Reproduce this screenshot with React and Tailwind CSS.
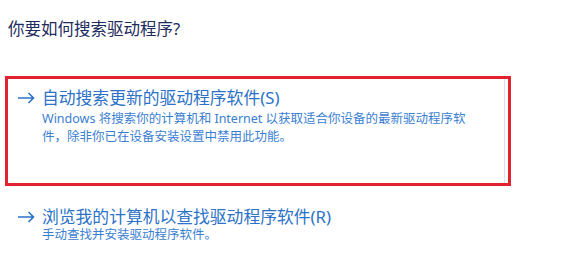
import React from 'react';

function Arrow() {
  return (
    <svg width="18" height="12" viewBox="0 0 18 12" fill="none" className="shrink-0">
      <path d="M1 6H16.5M11.5 1L16.5 6L11.5 11" stroke="#2b72c8" strokeWidth="1.6" />
    </svg>
  );
}

function Option({ title, children }) {
  return (
    <div>
      <div className="flex items-center gap-[7px] text-[16.8px] leading-[18px] text-[#2b72c8]">
        <Arrow />
        <span>{title}</span>
      </div>
      <div className="pl-[25px] text-[12.5px] text-[#3a80d2]">{children}</div>
    </div>
  );
}

export default function App() {
  return (
    <div
      className="w-[567px] h-[268px] bg-white overflow-hidden"
      style={{ fontFamily: '"Noto Sans", "Noto Sans CJK SC", sans-serif' }}
    >
      {/* Heading */}
      <h1 className="pt-[18px] pl-[8px] text-[16.5px] leading-[22px] text-[#1d2c5c] font-normal">
        你要如何搜索驱动程序?
      </h1>

      {/* Selected option, outlined in red */}
      <div className="mt-[36px] ml-[5px] w-[506px] h-[110px] border-[3px] border-[#e3222f]">
        <div className="h-full mr-[3px] border-r border-[#d4e6f6] pt-[10px] pl-[9px]">
          <Option title="自动搜索更新的驱动程序软件(S)">
            <p className="mt-[3px] leading-[18px]">
              Windows 将搜索你的计算机和 Internet 以获取适合你设备的最新驱动程序软
              <br />
              件，除非你已在设备安装设置中禁用此功能。
            </p>
          </Option>
        </div>
      </div>

      {/* Second option */}
      <div className="mt-[22px] pl-[17px]">
        <Option title="浏览我的计算机以查找驱动程序软件(R)">
          <p className="mt-[1px] leading-[16px]">手动查找并安装驱动程序软件。</p>
        </Option>
      </div>
    </div>
  );
}
